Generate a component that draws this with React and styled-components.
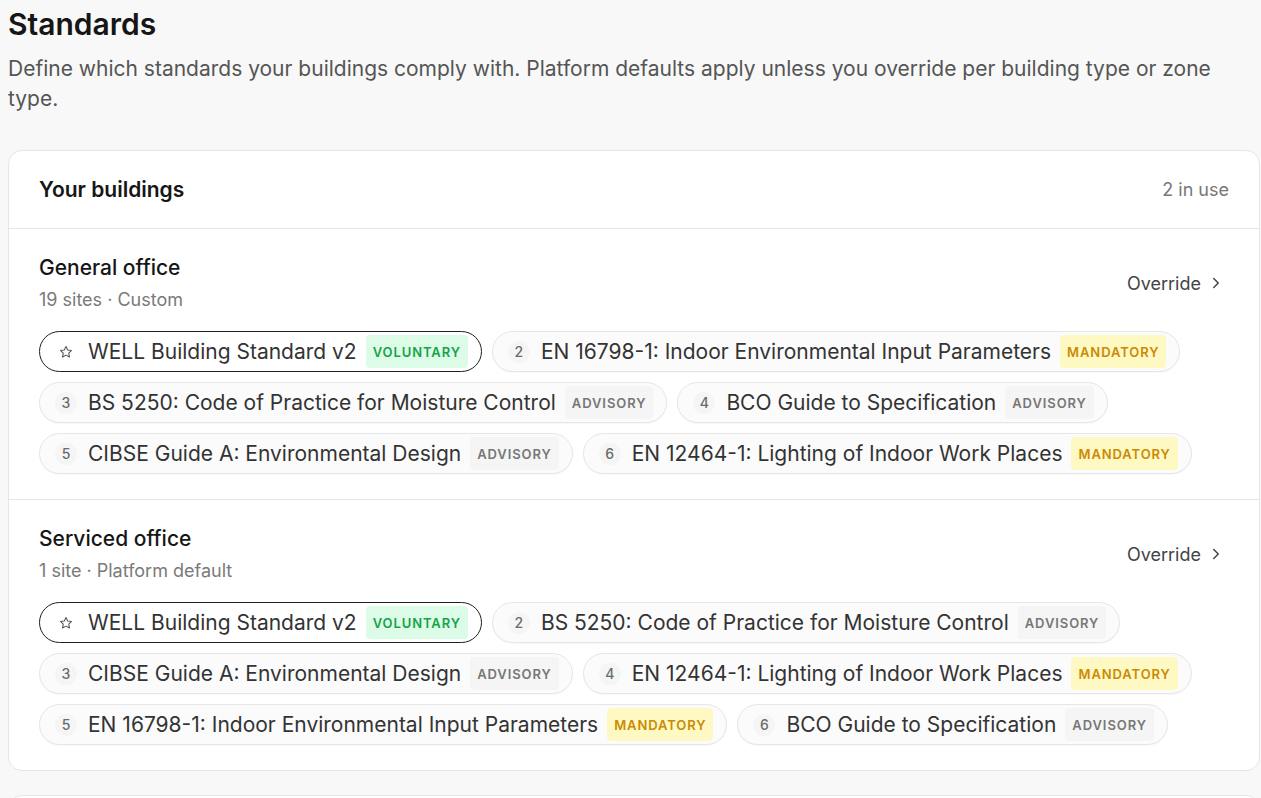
import styled, { createGlobalStyle } from "styled-components";

const GlobalStyle = createGlobalStyle`
  * { box-sizing: border-box; }
  body {
    margin: 0;
    background: #f8f8f8;
    font-family: Inter, "Noto Sans", sans-serif;
    color: #1a1a1a;
  }
`;

const buildings = [
  {
    name: "General office",
    meta: "19 sites · Custom",
    standards: [
      { name: "WELL Building Standard v2", level: "voluntary", primary: true },
      { name: "EN 16798-1: Indoor Environmental Input Parameters", level: "mandatory" },
      { name: "BS 5250: Code of Practice for Moisture Control", level: "advisory" },
      { name: "BCO Guide to Specification", level: "advisory" },
      { name: "CIBSE Guide A: Environmental Design", level: "advisory" },
      { name: "EN 12464-1: Lighting of Indoor Work Places", level: "mandatory" },
    ],
  },
  {
    name: "Serviced office",
    meta: "1 site · Platform default",
    standards: [
      { name: "WELL Building Standard v2", level: "voluntary", primary: true },
      { name: "BS 5250: Code of Practice for Moisture Control", level: "advisory" },
      { name: "CIBSE Guide A: Environmental Design", level: "advisory" },
      { name: "EN 12464-1: Lighting of Indoor Work Places", level: "mandatory" },
      { name: "EN 16798-1: Indoor Environmental Input Parameters", level: "mandatory" },
      { name: "BCO Guide to Specification", level: "advisory" },
    ],
  },
];

const levelColors = {
  voluntary: { bg: "#dcfce7", fg: "#16a34a" },
  mandatory: { bg: "#fef9c3", fg: "#ca8a04" },
  advisory: { bg: "#f5f5f5", fg: "#777777" },
};

export default function App() {
  return (
    <Page>
      <GlobalStyle />
      <Title>Standards</Title>
      <Intro>
        Define which standards your buildings comply with. Platform defaults apply
        unless you override per building type or zone type.
      </Intro>
      <Card>
        <CardHeader>
          <h2>Your buildings</h2>
          <span>2 in use</span>
        </CardHeader>
        {buildings.map((b) => (
          <Section key={b.name}>
            <SectionHead>
              <div>
                <h3>{b.name}</h3>
                <Meta>{b.meta}</Meta>
              </div>
              <OverrideLink>
                Override
                <svg width="18" height="18" viewBox="0 0 24 24" fill="none" stroke="currentColor" strokeWidth="2" strokeLinecap="round" strokeLinejoin="round">
                  <path d="m9 18 6-6-6-6" />
                </svg>
              </OverrideLink>
            </SectionHead>
            <Chips>
              {b.standards.map((s, i) => (
                <Chip key={s.name} primary={s.primary}>
                  <Index primary={s.primary}>
                    {s.primary ? (
                      <svg width="14" height="14" viewBox="0 0 24 24" fill="none" stroke="currentColor" strokeWidth="1.8" strokeLinejoin="round">
                        <path d="M12 2.5l2.9 6 6.6.9-4.8 4.6 1.2 6.5L12 17.4l-5.9 3.1 1.2-6.5L2.5 9.4l6.6-.9z" />
                      </svg>
                    ) : (
                      i + 1
                    )}
                  </Index>
                  <ChipName>{s.name}</ChipName>
                  <Badge level={s.level}>{s.level}</Badge>
                </Chip>
              ))}
            </Chips>
          </Section>
        ))}
      </Card>
      <NextCard />
    </Page>
  );
}

const Page = styled.div`
  padding: 0 1px 0 8px;
`;

const Title = styled.h1`
  margin: 0;
  padding-top: 5px;
  font-size: 30px;
  font-weight: 600;
  line-height: 38px;
  color: #161616;
`;

const Intro = styled.p`
  margin: 11px 0 0;
  font-size: 21px;
  line-height: 30px;
  color: #555555;
`;

const Card = styled.div`
  margin-top: 36px;
  background: #ffffff;
  border: 1px solid #e6e6e6;
  border-radius: 14px;
`;

const CardHeader = styled.div`
  display: flex;
  justify-content: space-between;
  align-items: center;
  height: 78px;
  padding: 0 30px;
  border-bottom: 1px solid #e6e6e6;
  h2 {
    margin: 0;
    font-size: 21px;
    font-weight: 600;
    color: #161616;
  }
  span {
    font-size: 18px;
    color: #777777;
  }
`;

const Section = styled.div`
  padding: 26px 30px 25px;
  & + & {
    border-top: 1px solid #e6e6e6;
  }
`;

const SectionHead = styled.div`
  display: flex;
  justify-content: space-between;
  align-items: center;
  margin-bottom: 20px;
  h3 {
    margin: 0;
    font-size: 21px;
    font-weight: 500;
    line-height: 26px;
    color: #161616;
  }
`;

const Meta = styled.div`
  margin-top: 8px;
  font-size: 18px;
  line-height: 22px;
  color: #7a7a7a;
`;

const OverrideLink = styled.div`
  display: flex;
  align-items: center;
  gap: 6px;
  font-size: 18px;
  color: #444444;
  padding-right: 4px;
`;

const Chips = styled.div`
  display: flex;
  flex-wrap: wrap;
  gap: 10px;
`;

const Chip = styled.div`
  display: flex;
  align-items: center;
  height: 41px;
  padding: 0 13px 0 15px;
  border-radius: 999px;
  background: ${(p) => (p.primary ? "#ffffff" : "#fbfbfb")};
  border: ${(p) => (p.primary ? "1.5px solid #1f1f1f" : "1px solid #e6e6e6")};
  box-shadow: ${(p) => (p.primary ? "none" : "0 1px 1px rgba(0, 0, 0, 0.03)")};
`;

const Index = styled.span`
  display: flex;
  align-items: center;
  justify-content: center;
  width: 22px;
  height: 22px;
  margin-right: 11px;
  border-radius: 50%;
  font-size: 14px;
  font-weight: 500;
  color: #6b6b6b;
  background: ${(p) => (p.primary ? "transparent" : "#f5f5f5")};
  svg {
    color: #555555;
  }
`;

const ChipName = styled.span`
  font-size: 21px;
  color: #333333;
  white-space: nowrap;
`;

const Badge = styled.span`
  margin-left: 9px;
  padding: 0 7px;
  height: 33px;
  display: flex;
  align-items: center;
  border-radius: 4px;
  font-size: 13px;
  font-weight: 600;
  letter-spacing: 0.07em;
  text-transform: uppercase;
  background: ${(p) => levelColors[p.level].bg};
  color: ${(p) => levelColors[p.level].fg};
`;

const NextCard = styled.div`
  margin-top: 24px;
  height: 40px;
  background: #ffffff;
  border: 1px solid #e6e6e6;
  border-radius: 14px 14px 0 0;
`;
